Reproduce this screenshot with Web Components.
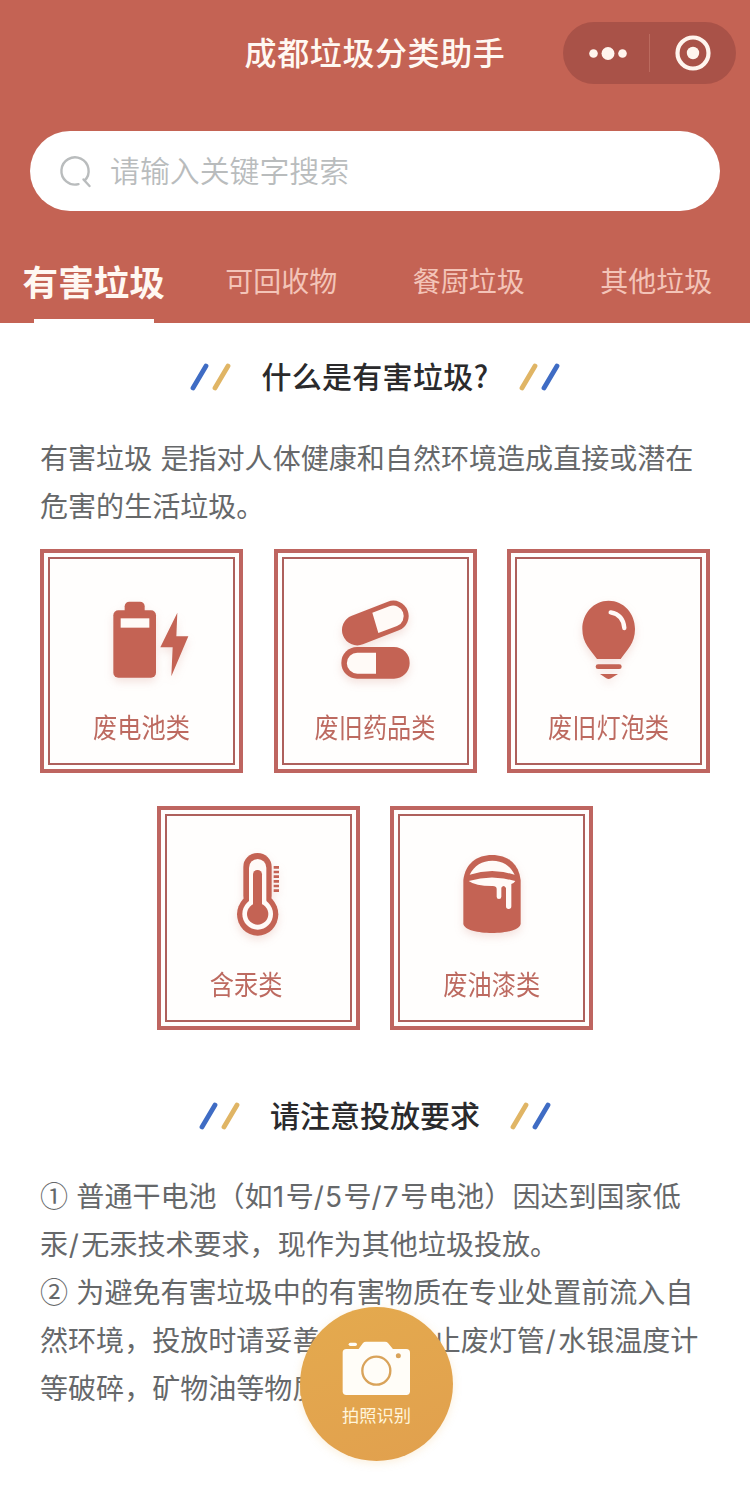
<!DOCTYPE html>
<html lang="zh-CN">
<head>
<meta charset="UTF-8">
<title>成都垃圾分类助手</title>
<style>
    body {
        margin: 0;
        background: #fff;
        font-family: "Noto Sans CJK SC", "Liberation Sans", sans-serif;
    }
</style>
</head>
<body>
<sorting-app></sorting-app>

<script>
const icons = {
    battery: `
        <svg viewBox="158 150 360 300">
            <rect x="252" y="211" width="128" height="202" rx="15"/>
            <rect x="286" y="185" width="60" height="40" rx="14"/>
            <rect class="w" x="274" y="235" width="86" height="28"/>
            <path d="M444 218L441 289H477L426 409L430 322H393Z"/>
        </svg>`,
    pills: `
        <svg viewBox="150 150 360 300">
            <path d="M277 270L385 228" fill="none" stroke="#c46354" stroke-width="92" stroke-linecap="round"/>
            <path class="w" d="M322 218L373 199A31 31 0 0 1 396 258L340 279Z"/>
            <rect x="229" y="321" width="205" height="95" rx="47"/>
            <path class="w" d="M333 338H277A31.500 31.500 0 0 0 277 401H333Z"/>
        </svg>`,
    bulb: `
        <svg viewBox="147 150 360 300">
            <path d="M326 182C371 182 405 220 405 267C405 310 381 330 362 357H291C272 330 247 310 247 267C247 220 281 182 326 182Z"/>
            <path d="M332 217Q370 224 373 264" fill="none" stroke="#fffaf7" stroke-width="13" stroke-linecap="round"/>
            <rect x="287" y="373" width="78" height="14" rx="7"/>
            <path d="M300 402H354L333 415Q326 419 319 415Z"/>
        </svg>`,
    thermometer: `
        <svg viewBox="145 141 360 300">
            <rect x="281" y="159" width="85" height="170" rx="42"/>
            <ellipse cx="324" cy="343" rx="62" ry="64"/>
            <rect class="w" x="298" y="177" width="52" height="150" rx="26"/>
            <ellipse class="w" cx="324" cy="342" rx="46" ry="47"/>
            <rect x="310" y="210" width="27" height="120" rx="13"/>
            <circle cx="324" cy="342" r="32"/>
            <path d="M372 202H388M372 216H388M372 230H388M372 244H388M372 258H388M372 272H388" stroke="#c46354" stroke-width="8"/>
        </svg>`,
    paint: `
        <svg viewBox="140 141 360 300">
            <path d="M234 240C240 190 275 165 320 165C366 165 400 190 406 240V372C400 408 240 408 234 372Z"/>
            <path class="w" d="M253 224C267 196 290 182 321 182C352 182 374 196 388 224Q320 202 253 224Z"/>
            <path class="w" d="M250 243Q320 222 390 243Q385 250 378 252V319A8 8 0 0 1 362 319V264Q355 253 348 263V290A7 7 0 0 1 334 290V266Q333 257 320 258Q270 258 250 243Z"/>
        </svg>`
};

class MiniCapsule extends HTMLElement {
    constructor() {
        super();
        this.attachShadow({ mode: "open" }).innerHTML = `
        <style>
        :host {
            display: grid;
            grid-template-columns: 1fr 1px 1fr;
            align-items: center;
            justify-items: center;
            width: 173px;
            height: 62px;
            border-radius: 31px;
            background: #a95248;
        }
        i {
            width: 1px;
            height: 38px;
            background: #bb6a5e;
        }
        svg {
            display: block;
            fill: #fff5ee;
        }
        .dots {
            margin-left: 4px;
        }
        </style>
        <svg class="dots" width="40" height="16" viewBox="0 0 40 16"><circle cx="5.500" cy="8.500" r="4.300"/><circle cx="20" cy="8.500" r="6.500"/><circle cx="34.500" cy="8.500" r="4.300"/></svg>
        <i></i>
        <svg width="36" height="36" viewBox="0 0 36 36"><circle cx="18" cy="18" r="15.500" fill="none" stroke="#fff5ee" stroke-width="4.200"/><circle cx="18" cy="18" r="6.200"/></svg>`;
    }
}

class NavBar extends HTMLElement {
    constructor() {
        super();
        this.attachShadow({ mode: "open" }).innerHTML = `
        <style>
        :host {
            display: grid;
            grid-template-columns: 1fr auto 1fr;
            align-items: center;
            height: 62px;
            padding: 22px 14px 0;
        }
        h1 {
            grid-column: 2;
            margin: 0;
            color: #fff8f2;
            font-size: 32px;
            font-weight: 500;
            line-height: 58px;
            height: 62px;
            letter-spacing: 0.600px;
            white-space: nowrap;
        }
        mini-capsule {
            justify-self: end;
        }
        </style>
        <h1><slot></slot></h1>
        <mini-capsule></mini-capsule>`;
    }
}

class SearchBar extends HTMLElement {
    constructor() {
        super();
        this.attachShadow({ mode: "open" }).innerHTML = `
        <style>
        :host {
            display: flex;
            align-items: center;
            gap: 18px;
            height: 80px;
            margin: 47px 30px 0;
            padding-left: 29px;
            box-sizing: border-box;
            border-radius: 40px;
            background: #fff;
            color: #b9bcbd;
            font-size: 29.900px;
            font-weight: 350;
            line-height: 76px;
        }
        span {
            height: 80px;
        }
        svg {
            fill: none;
            stroke: #b9bcbd;
            stroke-width: 2.400;
            stroke-linecap: round;
        }
        </style>
        <svg width="33" height="34" viewBox="0 0 33 34"><path d="M19.500 30.100A13.600 13.600 0 1 1 25.600 26.600M24.500 25.500L30.500 32"/></svg>
        <span><slot></slot></span>`;
    }
}

class TabItem extends HTMLElement {
    constructor() {
        super();
        this.attachShadow({ mode: "open" }).innerHTML = `
        <style>
        :host {
            display: flex;
            flex-direction: column;
            align-items: center;
            justify-content: space-between;
            flex: 1;
            height: 71px;
            color: #f3c4b8;
            font-size: 28px;
            line-height: 57px;
            white-space: nowrap;
        }
        :host([active]) {
            color: #fff8f2;
            font-size: 35.600px;
            font-weight: 700;
        }
        :host([active])::after {
            content: "";
            width: 120px;
            height: 4px;
            background: #fff;
        }
        </style>
        <span><slot></slot></span>`;
    }
}

class SectionTitle extends HTMLElement {
    constructor() {
        super();
        this.attachShadow({ mode: "open" }).innerHTML = `
        <style>
        :host {
            display: flex;
            align-items: center;
            justify-content: center;
            gap: 30px;
            height: 48px;
        }
        h2 {
            height: 48px;
            margin: 0;
            color: #2a2a2c;
            font-size: 30px;
            font-weight: 500;
            line-height: 45px;
        }
        svg {
            fill: none;
            stroke-width: 4.800;
            stroke-linecap: round;
        }
        </style>
        <svg width="41" height="28" viewBox="0 0 41 28"><path d="M3 25L16 3" stroke="#3f6cc4"/><path d="M25 25L38 3" stroke="#e0b565"/></svg>
        <h2><slot></slot></h2>
        <svg width="41" height="28" viewBox="0 0 41 28"><path d="M3 25L16 3" stroke="#e0b565"/><path d="M25 25L38 3" stroke="#3f6cc4"/></svg>`;
    }
}

class WasteCard extends HTMLElement {
    connectedCallback() {
        this.attachShadow({ mode: "open" }).innerHTML = `
        <style>
        :host {
            display: block;
            width: 203px;
            height: 223.500px;
            padding: 4px;
            box-sizing: border-box;
            border: 4px solid #be6560;
            background: #fffefd;
        }
        .inner {
            display: flex;
            flex-direction: column;
            align-items: center;
            height: 100%;
            padding-top: 31px;
            box-sizing: border-box;
            border: 2px solid #ae605c;
        }
        svg {
            flex: none;
            width: 120px;
            height: 100px;
            fill: #c46354;
            filter: drop-shadow(0 4px 4px rgba(196, 99, 84, 0.18));
        }
        .w {
            fill: #fffaf7;
        }
        .label {
            margin-top: 18.500px;
            color: #bd6a60;
            font-size: 24.200px;
            line-height: 36px;
            white-space: pre;
            transform: scaleY(1.12);
        }
        </style>
        <div class="inner">${icons[this.getAttribute("icon")]}<div class="label"><slot></slot></div></div>`;
    }
}

class CameraButton extends HTMLElement {
    constructor() {
        super();
        this.attachShadow({ mode: "open" }).innerHTML = `
        <style>
        :host {
            display: flex;
            flex-direction: column;
            align-items: center;
            width: 153px;
            height: 154px;
            padding-top: 33px;
            box-sizing: border-box;
            border-radius: 50%;
            background: linear-gradient(160deg, #e4aa4e, #e1a04e);
            color: #fff5dc;
            font-size: 17.300px;
            line-height: 26px;
            box-shadow: 0 2px 8px rgba(240, 190, 110, 0.25);
        }
        svg {
            display: block;
            width: 73px;
            height: 57px;
            margin-bottom: 5px;
            fill: #fffdf8;
        }
        </style>
        <svg viewBox="150 150 219 171">
            <rect x="158" y="177" width="202" height="138" rx="11"/>
            <path d="M202 182L219 159Q222 155 228 155H285Q291 155 294 159L313 182Z"/>
            <rect x="176" y="158" width="25" height="10" rx="5"/>
            <circle cx="259" cy="242" r="42" fill="none" stroke="#d9a35a" stroke-width="7"/>
            <circle cx="325" cy="197" r="7.500" fill="#d9a35a"/>
        </svg>
        <span><slot></slot></span>`;
    }
}

class SortingApp extends HTMLElement {
    constructor() {
        super();
        this.attachShadow({ mode: "open" }).innerHTML = `
        <style>
        :host {
            display: block;
            position: relative;
            width: 750px;
            height: 1488px;
            overflow: hidden;
        }
        header {
            height: 323px;
            background: #c46354;
        }
        nav {
            display: flex;
            padding-top: 41px;
        }
        main {
            padding: 30px 40px 0;
        }
        p {
            margin: 0;
            color: #66686a;
            font-size: 28.060px;
            line-height: 48px;
            word-spacing: 2px;
            white-space: nowrap;
        }
        .question {
            letter-spacing: 0.300px;
        }
        .intro {
            padding-top: 32px;
        }
        .cards {
            display: flex;
            flex-wrap: wrap;
            justify-content: center;
            gap: 33.500px 30.500px;
            margin-top: 20px;
        }
        .rules {
            padding-top: 62px;
        }
        .rules p:first-of-type {
            padding-top: 31px;
        }
        .num {
            margin-right: 0.500px;
            font-family: Inter, "Liberation Sans", sans-serif;
            font-size: 28px;
            letter-spacing: 1.100px;
            line-height: 1;
        }
        .slash {
            padding: 0 0.800px;
        }
        camera-button {
            position: absolute;
            left: 300px;
            top: 1307px;
        }
        </style>
        <header>
            <nav-bar>成都垃圾分类助手</nav-bar>
            <search-bar>请输入关键字搜索</search-bar>
            <nav>
                <tab-item active>有害垃圾</tab-item>
                <tab-item>可回收物</tab-item>
                <tab-item>餐厨垃圾</tab-item>
                <tab-item>其他垃圾</tab-item>
            </nav>
        </header>
        <main>
            <section-title class="question">什么是有害垃圾?</section-title>
            <p class="intro">有害垃圾 是指对人体健康和自然环境造成直接或潜在<br>危害的生活垃圾。</p>
            <div class="cards">
                <waste-card icon="battery">废电池类</waste-card>
                <waste-card icon="pills">废旧药品类</waste-card>
                <waste-card icon="bulb">废旧灯泡类</waste-card>
                <waste-card icon="thermometer">含汞类　</waste-card>
                <waste-card icon="paint">废油漆类</waste-card>
            </div>
            <section class="rules">
                <section-title>请注意投放要求</section-title>
                <p>① 普通干电池（如<span class="num">1</span>号<span class="num">/5</span>号<span class="num">/7</span>号电池）因达到国家低<br>汞<span class="num slash">/</span>无汞技术要求，现作为其他垃圾投放。</p>
                <p>② 为避免有害垃圾中的有害物质在专业处置前流入自<br>然环境，投放时请妥善包裹，防止废灯管<span class="num slash">/</span>水银温度计<br>等破碎，矿物油等物质</p>
            </section>
        </main>
        <camera-button>拍照识别</camera-button>`;
    }
}

customElements.define("mini-capsule", MiniCapsule);
customElements.define("nav-bar", NavBar);
customElements.define("search-bar", SearchBar);
customElements.define("tab-item", TabItem);
customElements.define("section-title", SectionTitle);
customElements.define("waste-card", WasteCard);
customElements.define("camera-button", CameraButton);
customElements.define("sorting-app", SortingApp);
</script>
</body>
</html>
